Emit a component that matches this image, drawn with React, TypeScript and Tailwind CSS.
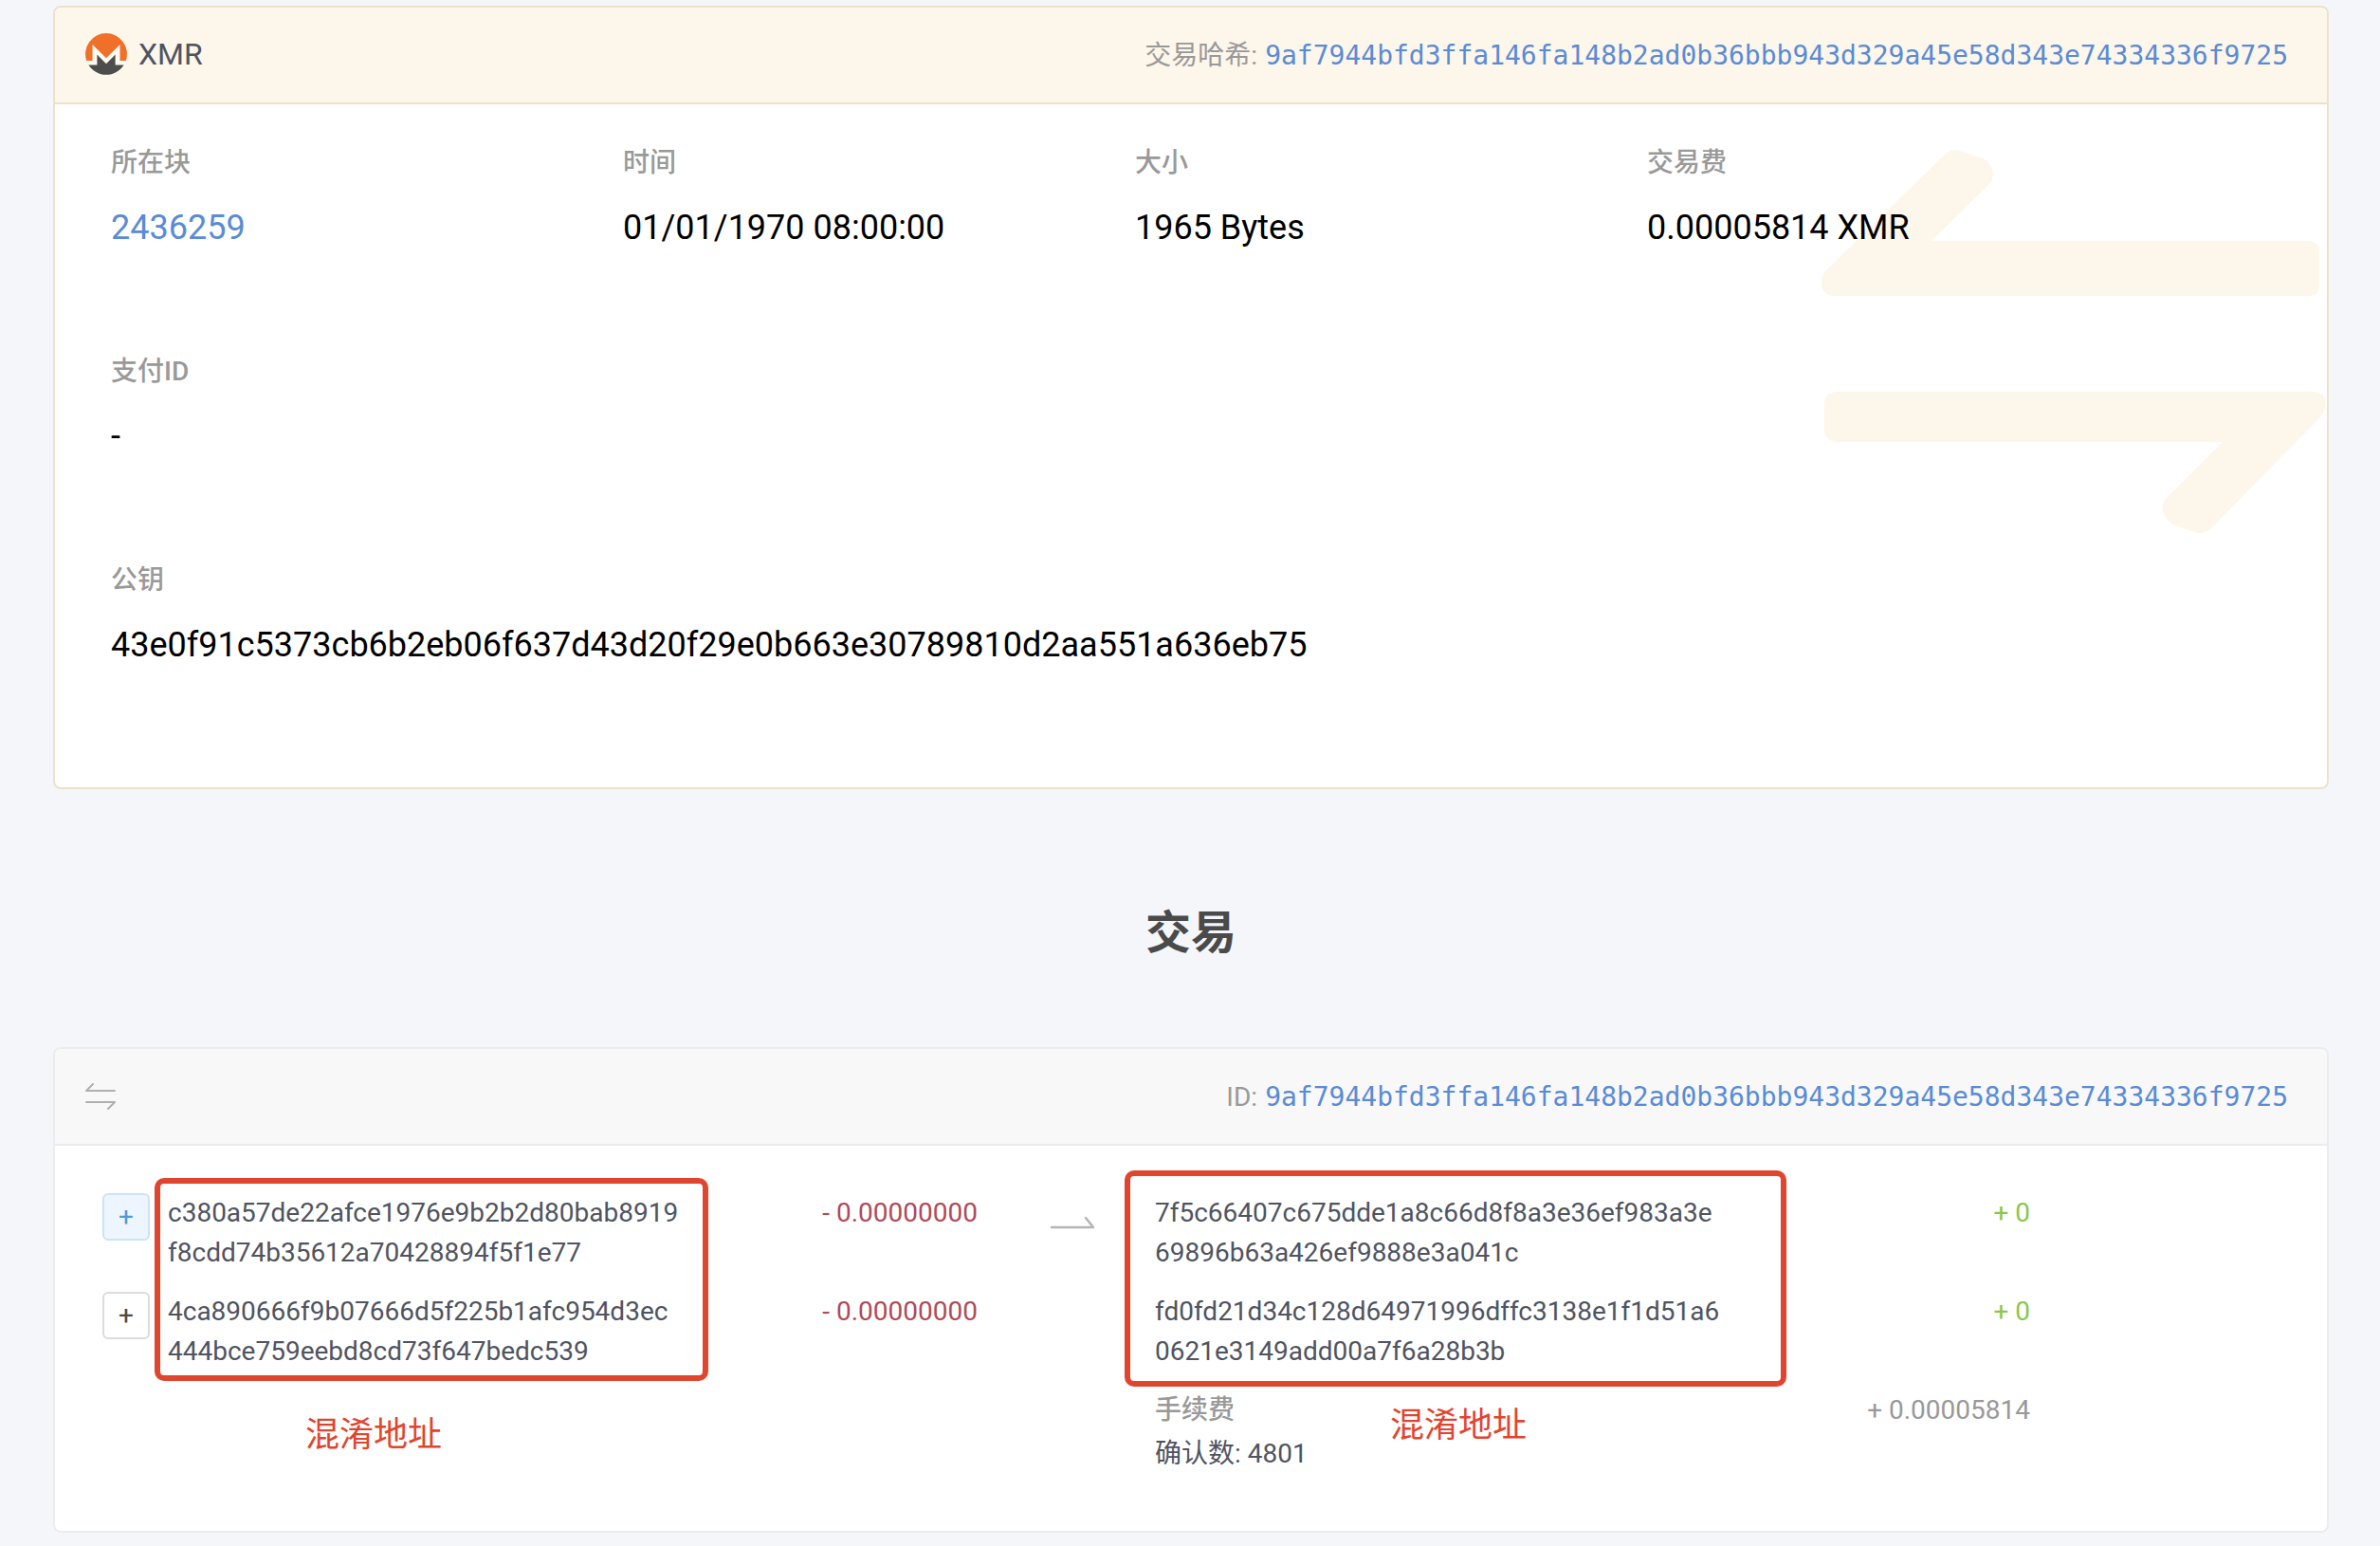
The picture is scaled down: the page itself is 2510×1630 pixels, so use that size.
import type { ReactNode } from "react";

const HASH = "9af7944bfd3ffa146fa148b2ad0b36bbb943d329a45e58d343e74334336f9725";

const inputs = [
  { address: "c380a57de22afce1976e9b2b2d80bab8919f8cdd74b35612a70428894f5f1e77", amount: "- 0.00000000", active: true },
  { address: "4ca890666f9b07666d5f225b1afc954d3ec444bce759eebd8cd73f647bedc539", amount: "- 0.00000000", active: false },
];

const outputs = [
  { address: "7f5c66407c675dde1a8c66d8f8a3e36ef983a3e69896b63a426ef9888e3a041c", amount: "+ 0" },
  { address: "fd0fd21d34c128d64971996dffc3138e1f1d51a60621e3149add00a7f6a28b3b", amount: "+ 0" },
];

function MoneroLogo() {
  return (
    <svg viewBox="0 0 44 44" className="size-11" aria-hidden="true">
      <circle cx="22" cy="22" r="21" fill="#fffaf2" />
      <path d="M22 0A22 22 0 0 0 1.2 29H7.5V12L22 26.2L36.5 12V29H42.8A22 22 0 0 0 22 0Z" fill="#f0702a" />
      <path d="M3.4 33.6A22 22 0 0 0 40.6 33.6H31.6V22.6L22 32.2L12.4 22.6V33.6Z" fill="#4d4d4d" />
    </svg>
  );
}

function SwapIcon() {
  return (
    <svg viewBox="0 0 32 28" className="h-7 w-8" fill="none" stroke="#b0b0b0" strokeWidth="2" strokeLinecap="round" strokeLinejoin="round" aria-hidden="true">
      <path d="M31 8H1L8 1" />
      <path d="M1 20H31L24 27" />
    </svg>
  );
}

function HalfArrow() {
  return (
    <svg viewBox="0 0 48 14" className="h-3.5 w-12" fill="none" stroke="#b5b5b5" strokeWidth="2.5" strokeLinecap="round" strokeLinejoin="round" aria-hidden="true">
      <path d="M2 12H46L38 2" />
    </svg>
  );
}

function Watermark() {
  return (
    <svg viewBox="1920 156 534 410" className="absolute top-[46px] right-0 h-[410px] w-[534px]" fill="#fdf6ea" aria-hidden="true">
      <path d="M2051 163Q2058 156 2067 159L2091 167Q2106 176 2100 192L2037 254H2434Q2446 254 2446 266V300Q2446 312 2434 312H1934Q1921 311 1921 298Q1921 291 1926 285Z" />
      <path d="M1937 413H2440Q2453 414 2453 424Q2453 432 2448 439L2332 557Q2326 563 2317 562L2292 553Q2276 543 2282 528L2344 466H1937Q1924 465 1924 453V426Q1924 414 1937 413Z" />
    </svg>
  );
}

function Field({ label, children }: { label: string; children: ReactNode }) {
  return (
    <div className="h-[220px] pt-[42px]">
      <dt className="text-[28px] leading-10 font-medium text-[#999999]">{label}</dt>
      <dd className="mt-[22px] text-[36px] leading-[52px] text-black">{children}</dd>
    </div>
  );
}

function HashLink({ label }: { label: string }) {
  return (
    <p className="flex items-center gap-2 pt-0.5 text-[28px] leading-10 text-[#999999]">
      <span>{label}</span>
      <a href="#tx" className="font-['DejaVu_Sans_Mono',monospace] text-[#5a8bd6]">
        {HASH}
      </a>
    </p>
  );
}

export default function App() {
  return (
    <main className="min-h-screen bg-[#f4f6fa] pt-1.5 pr-[54px] pb-4 pl-14 font-[Roboto,'Noto_Sans_CJK_SC',sans-serif] text-[28px] leading-[42px] text-[#4f5461]">
      <section className="rounded-lg border-2 border-[#ece2ca] bg-white">
        <header className="flex h-[102px] items-center justify-between rounded-t-md border-b-2 border-[#ece2ca] bg-[#fdf6ea] pr-[41px] pl-8">
          <div className="flex items-center gap-3 pb-0.5">
            <MoneroLogo />
            <span className="text-[32px]">XMR</span>
          </div>
          <HashLink label="交易哈希:" />
        </header>
        <div className="relative pb-[60px]">
          <Watermark />
          <dl className="relative grid grid-cols-4 pr-[177px] pl-[59px]">
            <Field label="所在块">
              <a href="#block" className="text-[#5a8bd6]">
                2436259
              </a>
            </Field>
            <Field label="时间">01/01/1970 08:00:00</Field>
            <Field label="大小">1965 Bytes</Field>
            <Field label="交易费">0.00005814 XMR</Field>
            <div className="col-span-4">
              <Field label="支付ID">-</Field>
            </div>
            <div className="col-span-4">
              <Field label="公钥">43e0f91c5373cb6b2eb06f637d43d20f29e0b663e30789810d2aa551a636eb75</Field>
            </div>
          </dl>
        </div>
      </section>

      <h2 className="pt-[120px] pb-[88px] text-center text-[48px] leading-[64px] font-bold text-[#4a4a4a]">交易</h2>

      <section className="rounded-lg border-2 border-[#ebecee] bg-white">
        <header className="flex h-[102px] items-center justify-between rounded-t-md border-b-2 border-[#ebecee] bg-[#f8f8f8] pr-[41px] pl-8">
          <SwapIcon />
          <HashLink label="ID:" />
        </header>
        <div className="grid grid-cols-[923fr_187fr_923fr] pt-[50px] pr-[313px] pb-[60px] pl-[50px]">
          <div className="relative">
            <ul className="flex flex-col gap-5">
              {inputs.map((item) => (
                <li key={item.address} className="flex items-start">
                  <button
                    type="button"
                    aria-label="+"
                    className={
                      item.active
                        ? "flex size-[50px] items-center justify-center rounded-md border-2 border-[#cfe2f1] bg-[#edf6fe] text-[#4e9bd8]"
                        : "flex size-[50px] items-center justify-center rounded-md border-2 border-[#dcdcdc] bg-white text-[#4a4a4a]"
                    }
                  >
                    +
                  </button>
                  <span className="ml-[19px] w-[540px] break-all">{item.address}</span>
                  <span className="ml-auto text-[#b04b58]">{item.amount}</span>
                </li>
              ))}
            </ul>
            <div className="absolute -top-4 left-[55px] h-[214px] w-[584px] rounded-[10px] border-6 border-[#e0452f]" />
            <p className="absolute top-[231px] left-[214px] text-[36px] leading-12 whitespace-nowrap text-[#e0452f]">混淆地址</p>
          </div>

          <div className="flex items-start justify-center pt-6 pl-3">
            <HalfArrow />
          </div>

          <div className="relative">
            <ul className="flex flex-col gap-5">
              {outputs.map((item) => (
                <li key={item.address} className="flex items-start justify-between">
                  <span className="w-[598px] break-all">{item.address}</span>
                  <span className="text-[#8bc84a]">{item.amount}</span>
                </li>
              ))}
              <li className="flex justify-between text-[#999999]">
                <span className="font-medium">手续费</span>
                <span>+ 0.00005814</span>
              </li>
            </ul>
            <p className="mt-1">确认数: 4801</p>
            <div className="absolute -top-6 -left-8 h-[228px] w-[698px] rounded-[10px] border-6 border-[#e0452f]" />
            <p className="absolute top-[221px] left-[248px] text-[36px] leading-12 whitespace-nowrap text-[#e0452f]">混淆地址</p>
          </div>
        </div>
      </section>
    </main>
  );
}
